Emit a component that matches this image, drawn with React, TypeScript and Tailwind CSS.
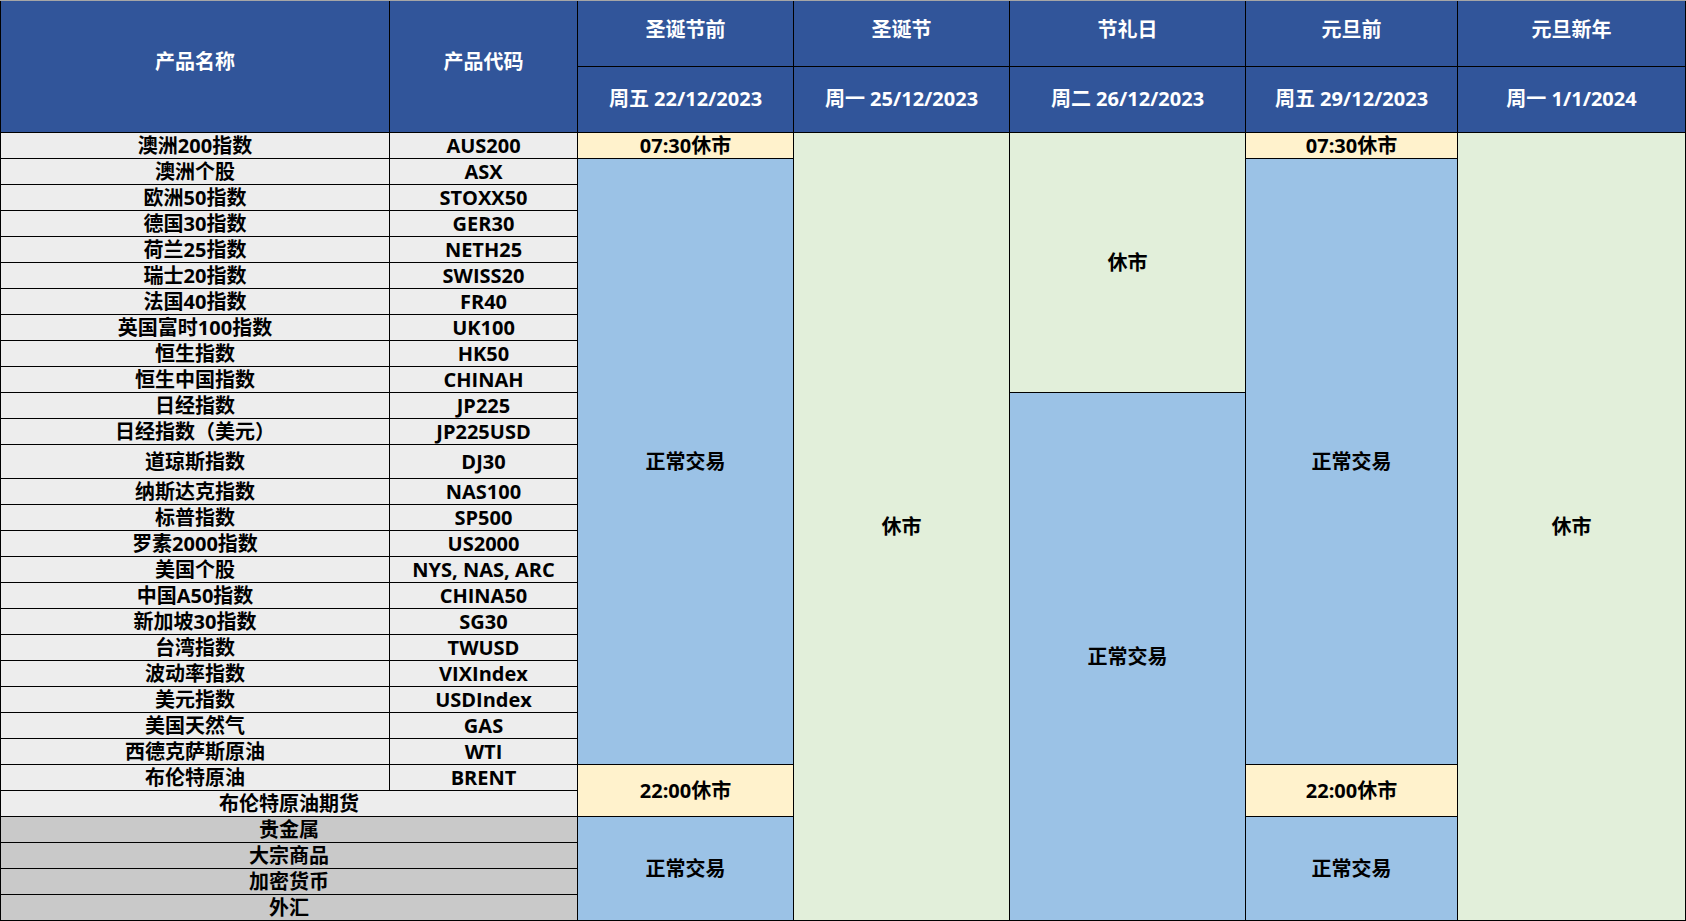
const products: [string, string][] = [
  ["澳洲200指数", "AUS200"],
  ["澳洲个股", "ASX"],
  ["欧洲50指数", "STOXX50"],
  ["德国30指数", "GER30"],
  ["荷兰25指数", "NETH25"],
  ["瑞士20指数", "SWISS20"],
  ["法国40指数", "FR40"],
  ["英国富时100指数", "UK100"],
  ["恒生指数", "HK50"],
  ["恒生中国指数", "CHINAH"],
  ["日经指数", "JP225"],
  ["日经指数（美元）", "JP225USD"],
  ["道琼斯指数", "DJ30"],
  ["纳斯达克指数", "NAS100"],
  ["标普指数", "SP500"],
  ["罗素2000指数", "US2000"],
  ["美国个股", "NYS, NAS, ARC"],
  ["中国A50指数", "CHINA50"],
  ["新加坡30指数", "SG30"],
  ["台湾指数", "TWUSD"],
  ["波动率指数", "VIXIndex"],
  ["美元指数", "USDIndex"],
  ["美国天然气", "GAS"],
  ["西德克萨斯原油", "WTI"],
  ["布伦特原油", "BRENT"],
];

const otherGroups = ["贵金属", "大宗商品", "加密货币", "外汇"];

const days = [
  { title: "圣诞节前", date: "周五 22/12/2023", titleCls: "col-[3] row-[1]", dateCls: "col-[3] row-[2]" },
  { title: "圣诞节", date: "周一 25/12/2023", titleCls: "col-[4] row-[1]", dateCls: "col-[4] row-[2]" },
  { title: "节礼日", date: "周二 26/12/2023", titleCls: "col-[5] row-[1]", dateCls: "col-[5] row-[2]" },
  { title: "元旦前", date: "周五 29/12/2023", titleCls: "col-[6] row-[1]", dateCls: "col-[6] row-[2]" },
  { title: "元旦新年", date: "周一 1/1/2024", titleCls: "col-[7] row-[1]", dateCls: "col-[7] row-[2]" },
];

// merged status blocks, grid lines written out in full
const blocks = [
  { cls: "col-[3] row-[3] bg-[#fff2cc]", text: "07:30休市" },
  { cls: "col-[3] row-[4/27] bg-[#9bc2e6]", text: "正常交易" },
  { cls: "col-[3] row-[27/29] bg-[#fff2cc]", text: "22:00休市" },
  { cls: "col-[3] row-[29/33] bg-[#9bc2e6]", text: "正常交易" },
  { cls: "col-[4] row-[3/33] bg-[#e2efda]", text: "休市" },
  { cls: "col-[5] row-[3/13] bg-[#e2efda]", text: "休市" },
  { cls: "col-[5] row-[13/33] bg-[#9bc2e6]", text: "正常交易" },
  { cls: "col-[6] row-[3] bg-[#fff2cc]", text: "07:30休市" },
  { cls: "col-[6] row-[4/27] bg-[#9bc2e6]", text: "正常交易" },
  { cls: "col-[6] row-[27/29] bg-[#fff2cc]", text: "22:00休市" },
  { cls: "col-[6] row-[29/33] bg-[#9bc2e6]", text: "正常交易" },
  { cls: "col-[7] row-[3/33] bg-[#e2efda]", text: "休市" },
];

const cell = "flex items-center justify-center whitespace-nowrap leading-none";

export default function App() {
  return (
    <div className="w-[1686px] h-[921px] bg-white font-['Open_Sans','Noto_Sans_CJK_SC',sans-serif] font-bold text-[20px] text-black">
      <div className="grid grid-cols-[388px_187px_215px_215px_235px_211px_227px] grid-rows-[65px_65px_repeat(12,25px)_33px_repeat(17,25px)] gap-px bg-black border-t border-[#a6a6a6] px-px pb-px">
        {/* header */}
        <div className={`${cell} col-[1] row-[1/3] bg-[#31559a] text-white pb-[10px]`}>产品名称</div>
        <div className={`${cell} col-[2] row-[1/3] bg-[#31559a] text-white pb-[10px]`}>产品代码</div>
        {days.map((d) => (
          <div key={d.title} className="contents">
            <div className={`${cell} ${d.titleCls} bg-[#31559a] text-white pb-[7px]`}>{d.title}</div>
            <div className={`${cell} ${d.dateCls} bg-[#31559a] text-white pb-[2px]`}>{d.date}</div>
          </div>
        ))}

        {blocks.map((b, i) => (
          <div key={i} className={`${cell} ${b.cls}`}>
            {b.text}
          </div>
        ))}

        {/* product rows, auto-placed into columns 1-2 */}
        {products.map(([name, code]) => (
          <div key={code} className="contents">
            <div className={`${cell} col-[1] bg-[#ededed]`}>{name}</div>
            <div className={`${cell} col-[2] bg-[#ededed]`}>{code}</div>
          </div>
        ))}
        <div className={`${cell} col-[1/3] bg-[#ededed]`}>布伦特原油期货</div>
        {otherGroups.map((g) => (
          <div key={g} className={`${cell} col-[1/3] bg-[#c9c9c9]`}>
            {g}
          </div>
        ))}
      </div>
    </div>
  );
}
